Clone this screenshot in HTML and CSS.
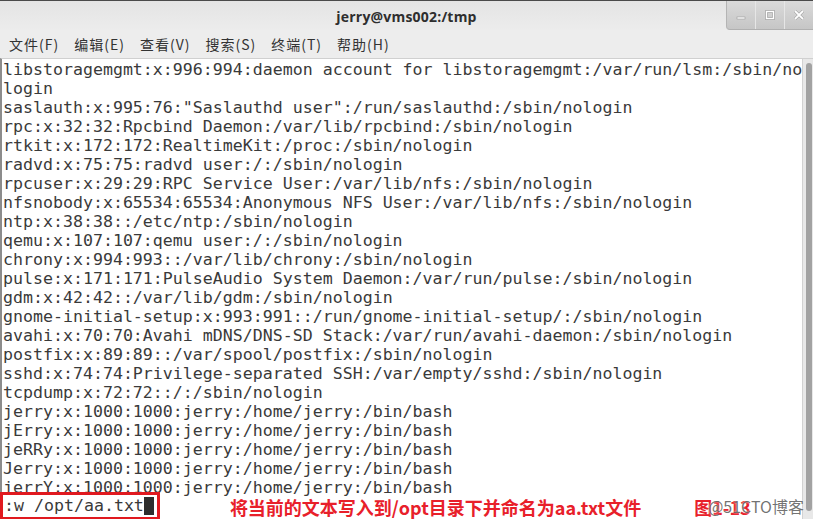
FILE: index.html
```html
<!doctype html>
<html lang="zh">
<head>
    <meta charset="UTF-8">
    <title>jerry@vms002:/tmp</title>
    <link rel="stylesheet" href="styles.css">
</head>
<body>
<div class="window">
    <div class="titlebar">
        <span></span>
        <span class="title">jerry@vms002:/tmp</span>
        <div class="controls">
            <span class="ctl">
                <svg width="12" height="12" viewBox="0 0 12 12"><rect x="2" y="8" width="8" height="2" fill="#fff" stroke="#9a9a9a" stroke-width="0.6"/></svg>
            </span>
            <span class="ctl">
                <svg width="12" height="12" viewBox="0 0 12 12"><rect x="2.5" y="2.5" width="7" height="7" fill="none" stroke="#9a9a9a" stroke-width="2.6"/><rect x="2.5" y="2.5" width="7" height="7" fill="none" stroke="#fff" stroke-width="1.4"/></svg>
            </span>
            <span class="ctl">
                <svg width="12" height="12" viewBox="0 0 12 12"><path d="M2 2 L10 10 M10 2 L2 10" stroke="#9a9a9a" stroke-width="3"/><path d="M2 2 L10 10 M10 2 L2 10" stroke="#fff" stroke-width="1.8"/></svg>
            </span>
        </div>
    </div>
    <div class="menubar">
        <span class="menu">文件(F)</span>
        <span class="menu">编辑(E)</span>
        <span class="menu">查看(V)</span>
        <span class="menu">搜索(S)</span>
        <span class="menu">终端(T)</span>
        <span class="menu">帮助(H)</span>
    </div>
    <div class="terminal">
        <div class="screen">
<pre class="lines">libstoragemgmt:x:996:994:daemon account for libstoragemgmt:/var/run/lsm:/sbin/no
login
saslauth:x:995:76:"Saslauthd user":/run/saslauthd:/sbin/nologin
rpc:x:32:32:Rpcbind Daemon:/var/lib/rpcbind:/sbin/nologin
rtkit:x:172:172:RealtimeKit:/proc:/sbin/nologin
radvd:x:75:75:radvd user:/:/sbin/nologin
rpcuser:x:29:29:RPC Service User:/var/lib/nfs:/sbin/nologin
nfsnobody:x:65534:65534:Anonymous NFS User:/var/lib/nfs:/sbin/nologin
ntp:x:38:38::/etc/ntp:/sbin/nologin
qemu:x:107:107:qemu user:/:/sbin/nologin
chrony:x:994:993::/var/lib/chrony:/sbin/nologin
pulse:x:171:171:PulseAudio System Daemon:/var/run/pulse:/sbin/nologin
gdm:x:42:42::/var/lib/gdm:/sbin/nologin
gnome-initial-setup:x:993:991::/run/gnome-initial-setup/:/sbin/nologin
avahi:x:70:70:Avahi mDNS/DNS-SD Stack:/var/run/avahi-daemon:/sbin/nologin
postfix:x:89:89::/var/spool/postfix:/sbin/nologin
sshd:x:74:74:Privilege-separated SSH:/var/empty/sshd:/sbin/nologin
tcpdump:x:72:72::/:/sbin/nologin
jerry:x:1000:1000:jerry:/home/jerry:/bin/bash
jErry:x:1000:1000:jerry:/home/jerry:/bin/bash
jeRRy:x:1000:1000:jerry:/home/jerry:/bin/bash
Jerry:x:1000:1000:jerry:/home/jerry:/bin/bash
jerrY:x:1000:1000:jerry:/home/jerry:/bin/bash</pre>
            <div class="lastline">
                <span class="cmd">:w /opt/aa.txt<span class="cursor"></span></span>
                <span class="note">将当前的文本写入到/opt目录下并命名为aa.txt文件</span>
                <span class="figure">图1-13<span class="watermark">@51CTO博客</span></span>
            </div>
        </div>
        <div class="scrollbar"><div class="thumb"></div></div>
    </div>
</div>
</body>
</html>
```

FILE: styles.css
```css
body {
    margin: 0;
    width: 813px;
    height: 519px;
    overflow: hidden;
    background-color: #3a3a3a;
}

.window {
    height: 518px;
    display: flex;
    flex-direction: column;
    background-color: #ededed;
    border-top: 1px solid #4a4a4a;
    overflow: hidden;
}

.titlebar {
    height: 29px;
    display: grid;
    grid-template-columns: 1fr auto 1fr;
    align-items: start;
    background: linear-gradient(#e4e4e4, #ececec);
}

.title {
    padding-top: 6px;
    font-family: "Open Sans", "DejaVu Sans", sans-serif;
    font-weight: 700;
    font-size: 14px;
    letter-spacing: 0.2px;
    color: #2e2e2e;
}

.controls {
    justify-self: end;
    display: flex;
    height: 28px;
    background: linear-gradient(#dadada, #c6c6c6);
    border-left: 1px solid #b4b4b4;
    border-bottom: 1px solid #b0b0b0;
    border-bottom-left-radius: 4px;
}

.ctl {
    width: 28px;
    display: flex;
    align-items: center;
    justify-content: center;
    border-left: 1px solid #e6e6e6;
}

.ctl:first-child {
    border-left: none;
}

.menubar {
    height: 28px;
    display: flex;
    align-items: center;
    gap: 15px;
    padding-left: 9px;
    font-family: "Noto Sans CJK SC", "Noto Sans", sans-serif;
    font-size: 14px;
    letter-spacing: 1px;
    color: #333;
}

.terminal {
    flex: 1;
    display: flex;
    background-color: #fff;
    border-top: 1px solid #d0d0d0;
    border-left: 2px solid #8c8c8c;
}

.screen {
    width: 800px;
    padding: 1px 0 0 1px;
}

.lines {
    margin: 0;
    font-family: "DejaVu Sans Mono", "Liberation Mono", monospace;
    font-size: 16.6px;
    line-height: 19px;
    color: #3a3a3a;
}

.lastline {
    display: flex;
    align-items: center;
    height: 27px;
    margin: -5px 0 0 -3px;
    position: relative;
}

.cmd {
    display: flex;
    align-items: center;
    height: 22px;
    padding: 0 3px 0 1px;
    border: 3px solid #e0191f;
    background-color: #fff;
    font-family: "DejaVu Sans Mono", "Liberation Mono", monospace;
    font-size: 16.6px;
    color: #3a3a3a;
    white-space: pre;
}

.cursor {
    width: 10px;
    height: 18px;
    background-color: #2e2e2e;
}

.note {
    margin-left: 70px;
    padding-top: 3px;
    font-family: "Noto Sans CJK SC", "Noto Sans", sans-serif;
    font-weight: 700;
    font-size: 18px;
    color: #e8202a;
}

.figure {
    position: relative;
    margin-left: 53px;
    padding-top: 3px;
    font-family: "Noto Sans CJK SC", "Noto Sans", sans-serif;
    font-weight: 700;
    font-size: 18px;
    color: #e8202a;
}

.watermark {
    position: absolute;
    left: 14px;
    top: 3px;
    font-weight: 400;
    font-size: 16px;
    color: rgba(90, 90, 90, 0.85);
    white-space: nowrap;
    text-shadow: 0 0 2px #fff;
}

.scrollbar {
    width: 11px;
    background-color: #e8e8e8;
    border-left: 1px solid #d2d2d2;
}

.thumb {
    height: 448px;
    margin: 4px 1px 0 3px;
    background-color: #a2a2a2;
    border-radius: 3px;
}
```
